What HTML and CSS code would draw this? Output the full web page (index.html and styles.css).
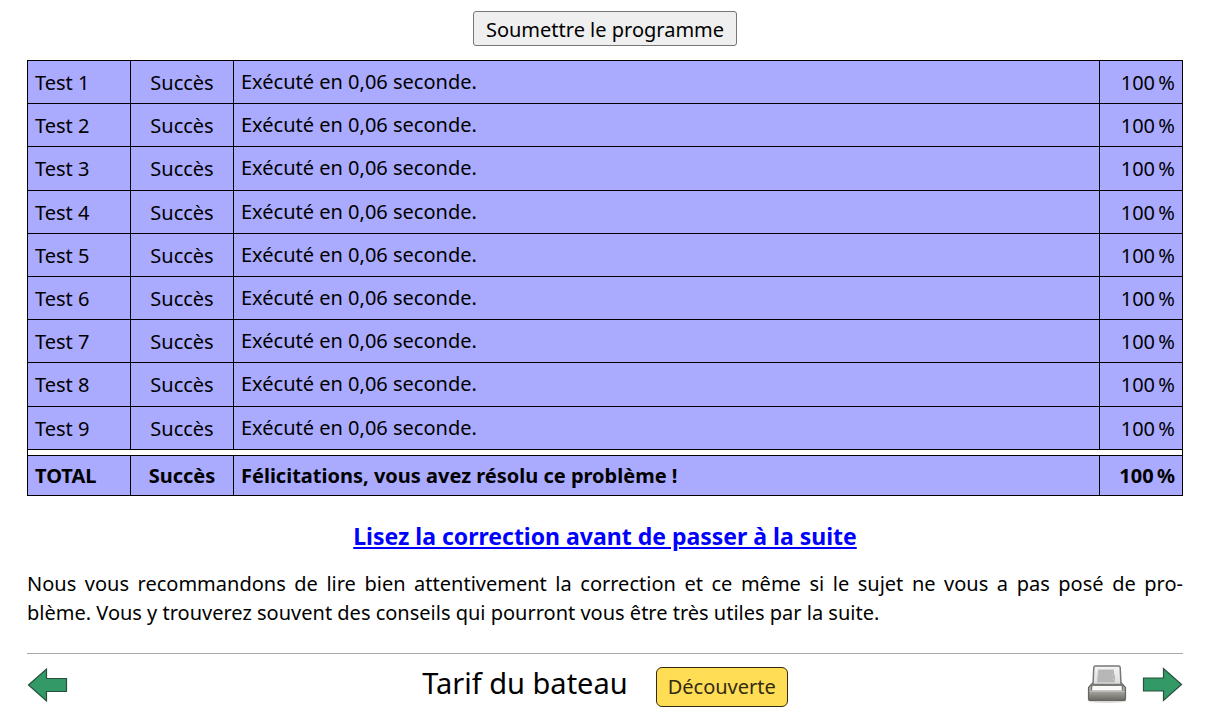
FILE: index.html
```html
<!DOCTYPE html>
<html lang="fr">
<head>
<meta charset="utf-8">
<title>Tarif du bateau</title>
<link rel="stylesheet" href="styles.css">
</head>
<body>
<main>
<div class="submit"><button type="button">Soumettre le programme</button></div>
<table class="results">
<tbody>
<tr><td class="name">Test 1</td><td class="status">Succès</td><td class="message"><p>Exécuté en 0,06 seconde.</p></td><td class="score">100&#8239;%</td></tr>
<tr><td class="name">Test 2</td><td class="status">Succès</td><td class="message"><p>Exécuté en 0,06 seconde.</p></td><td class="score">100&#8239;%</td></tr>
<tr><td class="name">Test 3</td><td class="status">Succès</td><td class="message"><p>Exécuté en 0,06 seconde.</p></td><td class="score">100&#8239;%</td></tr>
<tr><td class="name">Test 4</td><td class="status">Succès</td><td class="message"><p>Exécuté en 0,06 seconde.</p></td><td class="score">100&#8239;%</td></tr>
<tr><td class="name">Test 5</td><td class="status">Succès</td><td class="message"><p>Exécuté en 0,06 seconde.</p></td><td class="score">100&#8239;%</td></tr>
<tr><td class="name">Test 6</td><td class="status">Succès</td><td class="message"><p>Exécuté en 0,06 seconde.</p></td><td class="score">100&#8239;%</td></tr>
<tr><td class="name">Test 7</td><td class="status">Succès</td><td class="message"><p>Exécuté en 0,06 seconde.</p></td><td class="score">100&#8239;%</td></tr>
<tr><td class="name">Test 8</td><td class="status">Succès</td><td class="message"><p>Exécuté en 0,06 seconde.</p></td><td class="score">100&#8239;%</td></tr>
<tr><td class="name">Test 9</td><td class="status">Succès</td><td class="message"><p>Exécuté en 0,06 seconde.</p></td><td class="score">100&#8239;%</td></tr>
</tbody>
<tbody class="total">
<tr class="gap"><td colspan="4"></td></tr>
<tr><td class="name">TOTAL</td><td class="status">Succès</td><td class="message">Félicitations, vous avez résolu ce problème&nbsp;!</td><td class="score">100&#8239;%</td></tr>
</tbody>
</table>
<h2 class="correction"><a href="#correction">Lisez la correction avant de passer à la suite</a></h2>
<p class="advice">Nous vous recommandons de lire bien attentivement la correction et ce même si le sujet ne vous a pas posé de pro&shy;blème.&nbsp;Vous y trouverez souvent des conseils qui pourront vous être très utiles par la suite.</p>
</main>
<footer class="bar">
<a class="prev" href="#precedent" aria-label="Précédent">
<svg width="42" height="38" viewBox="0 0 42 38"><path d="M1.5 19 19.5 3V12.5H39.5V25.5H19.5V35Z" fill="#339966" stroke="#28503c" stroke-width="1.2"/></svg>
</a>
<div class="heading"><h1>Tarif du bateau</h1><span class="badge">Découverte</span></div>
<div class="actions">
<a href="#imprimer" aria-label="Imprimer">
<svg width="40" height="40" viewBox="0 1.5 40 40">
<defs>
<linearGradient id="body" x1="0" y1="0" x2="0" y2="1"><stop offset="0" stop-color="#b5b4ae"/><stop offset=".5" stop-color="#a3a29c"/><stop offset="1" stop-color="#686761"/></linearGradient>
<linearGradient id="paper" x1="0" y1="0" x2="0" y2="1"><stop offset="0" stop-color="#f4f4f4"/><stop offset="1" stop-color="#dcdcdc"/></linearGradient>
</defs>
<ellipse cx="20" cy="37" rx="19.5" ry="2.5" fill="#000" opacity=".15"/>
<path d="M5.5 19.500H34.5L38.500 24V35Q38.500 37 36.500 37H3.500Q1.500 37 1.500 35V24Z" fill="url(#body)" stroke="#66655f" stroke-width="1.2"/>
<path d="M8.500 2.500H31.500Q33 2.500 33.200 4L34 21H6L6.800 4Q7 2.500 8.500 2.500Z" fill="url(#paper)" stroke="#777" stroke-width="1.5"/>
<path d="M11 6H27V11H28V19H10Z" fill="#bdbdbd"/>
<path d="M12 7.5H26M12 9.5H27M12 11.5H25M11 13.5H28M11 15.5H25M11 17.5H27" stroke="#adadad" stroke-width=".8"/>
<path d="M4 21H36V27H4Z" fill="#7b7a75"/>
<path d="M5.5 22.5H34.5L35 27H5Z" fill="#fafafa"/>
<path d="M3 28H37" stroke="#bebdb8"/>
</svg>
</a>
<a href="#suivant" aria-label="Suivant">
<svg width="42" height="38" viewBox="0 0 42 38"><path d="M40.5 18.5 22.5 2.5V12H2.5V25H22.5V34.5Z" fill="#339966" stroke="#28503c" stroke-width="1.2"/></svg>
</a>
</div>
</footer>
</body>
</html>
```
FILE: styles.css
```css
body {
  margin: 0;
  padding: 11px 25px 0 27px;
  background: #fff;
  color: #000;
  font: 20px/29px "Noto Sans", sans-serif;
}

.submit {
  display: flex;
  justify-content: center;
  margin-bottom: 14px;
}

.submit button {
  padding: 3px 12px 1px;
  border: 1px solid #767676;
  border-radius: 3px;
  background: #efefef;
  color: #000;
  font: inherit;
}

.results {
  width: 100%;
  height: 436px;
  table-layout: fixed;
  border-collapse: collapse;
}

.results td {
  padding: 7px 7px 6px;
  border: 1px solid #000;
  background: #aaf;
}

.results .name,
.results .status {
  width: 88px;
}

.results .status {
  text-align: center;
}

.results .message {
  padding-top: 5px;
}

.results .message p {
  margin: 0;
}

.results .score {
  width: 68px;
  text-align: right;
}

.results .gap td {
  height: 5px;
  padding: 0;
  background: #fff;
}

.total {
  font-weight: bold;
}

.results .total .name,
.results .total .status,
.results .total .message,
.results .total .score {
  padding-top: 5px;
  padding-bottom: 5px;
}

.correction {
  margin: 24px 0 17px;
  font-size: 23px;
  line-height: 32px;
  text-align: center;
}

.correction a {
  color: #00f;
}

.advice {
  margin: 0;
  text-align: justify;
  hyphens: manual;
}

.bar {
  display: grid;
  grid-template-columns: 1fr auto 1fr;
  align-items: center;
  margin-top: 26px;
  padding-top: 8px;
  border-top: 1px solid #aaa;
}

.bar svg {
  display: block;
}

.heading {
  display: flex;
  align-items: center;
  gap: 28px;
}

.heading h1 {
  margin: 0 0 4px;
  font-size: 29px;
  line-height: 36px;
  font-weight: normal;
}

.badge {
  margin-top: 5px;
  padding: 4px 11px 5px;
  border: 1px solid #332b11;
  border-radius: 6px;
  background: #fd5;
  color: #332b11;
}

.actions {
  display: flex;
  justify-content: flex-end;
  align-items: center;
  gap: 14px;
}
```
